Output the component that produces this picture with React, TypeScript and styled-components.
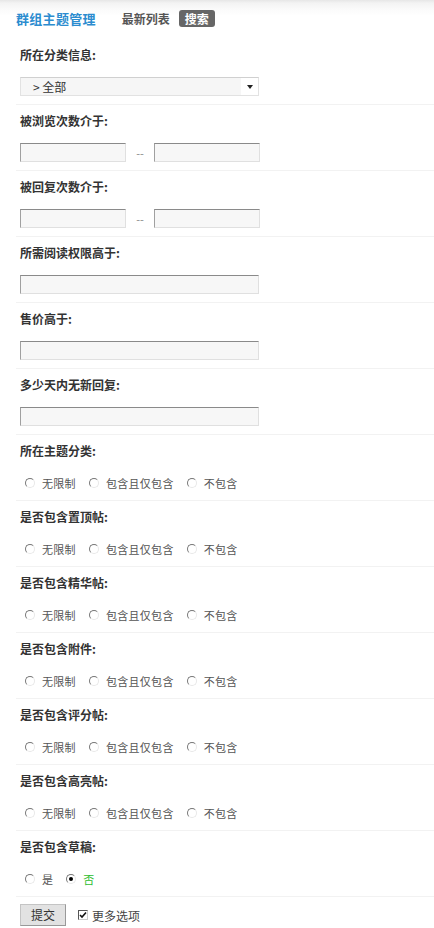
import React from "react";
import styled, { createGlobalStyle } from "styled-components";

const Global = createGlobalStyle`
  html, body { margin: 0; padding: 0; background: #fff; }
  body { font-family: "Noto Sans CJK SC", "Noto Sans", sans-serif; font-size: 12px; color: #333; }
  * { box-sizing: border-box; }
`;

const Page = styled.div`
  width: 434px;
`;

const Header = styled.div`
  height: 39px;
  display: flex;
  align-items: center;
  padding-left: 16px;
  padding-bottom: 2px;
  background: linear-gradient(#e6e6e6 0, #f3f3f3 3px, #fbfbfb 10px, #fff 16px);
`;

const Title = styled.div`
  font-size: 13px;
  color: #2c8ccf;
  font-weight: 700;
  letter-spacing: 0.3px;
  margin-right: 26px;
`;

const Tab = styled.div<{ $active?: boolean }>`
  font-size: 12px;
  font-weight: 700;
  height: 17px;
  line-height: 17px;
  padding: 0 ${(p) => (p.$active ? "6px" : "0")};
  margin-right: 9px;
  border-radius: 3px;
  color: ${(p) => (p.$active ? "#fff" : "#555")};
  background: ${(p) => (p.$active ? "#666" : "transparent")};
`;

const Form = styled.div`
  margin-left: 16px;
`;

const Section = styled.div`
  padding: 9px 0 8px 4px;
  border-bottom: 1px solid #f2f2f2;
`;

const Label = styled.div`
  height: 14px;
  line-height: 14px;
  font-weight: 700;
  color: #333;
  margin-bottom: 15px;
`;

const SelectBox = styled.div`
  width: 239px;
  height: 19px;
  border: 1px solid #e2e2e2;
  border-top-color: #d0d0d0;
  display: flex;
  align-items: center;
  background: linear-gradient(to right, #f6f6f6 0, #f6f6f6 220px, #fff 220px);
  padding-left: 12px;
  color: #333;
  font-size: 12px;
  position: relative;
`;

const Arrow = styled.span`
  position: absolute;
  right: 5px;
  top: 7px;
  width: 0;
  height: 0;
  border-left: 3px solid transparent;
  border-right: 3px solid transparent;
  border-top: 4px solid #222;
`;

const Range = styled.div`
  display: flex;
  align-items: center;
`;

const Input = styled.div<{ $wide?: boolean }>`
  width: ${(p) => (p.$wide ? "239px" : "106px")};
  height: 19px;
  background: #f7f7f7;
  border: 1px solid #e0e0e0;
  border-top-color: #8a8a8a;
  border-left-color: #a0a0a0;
`;

const Dash = styled.span`
  width: 28px;
  text-align: center;
  color: #888;
  font-size: 11px;
`;

const RadioRow = styled.div`
  height: 19px;
  display: flex;
  align-items: center;
  padding-left: 5px;
  gap: 13px;
`;

const RadioItem = styled.div`
  display: flex;
  align-items: center;
  gap: 7px;
`;

const Radio = styled.span<{ $checked?: boolean }>`
  width: 10px;
  height: 10px;
  border-radius: 50%;
  border: 1px solid;
  border-color: #777 #e8e8e8 #e8e8e8 #777;
  position: relative;
  background: #fff;
  &::after {
    content: "";
    display: ${(p) => (p.$checked ? "block" : "none")};
    position: absolute;
    left: 2px;
    top: 2px;
    width: 4px;
    height: 4px;
    border-radius: 50%;
    background: #000;
  }
`;

const RadioText = styled.span<{ $green?: boolean }>`
  color: ${(p) => (p.$green ? "#2dbd2d" : "#555")};
  font-size: 11px;
  letter-spacing: 0.3px;
`;

const Footer = styled.div`
  display: flex;
  align-items: center;
  padding: 7px 0 0 4px;
  gap: 12px;
`;

const Button = styled.div`
  width: 46px;
  height: 22px;
  line-height: 20px;
  text-align: center;
  background: #e2e2e2;
  border: 1px solid #c4c4c4;
  border-right-color: #999;
  border-bottom-color: #999;
  color: #333;
  font-size: 12px;
`;

const Check = styled.label`
  display: flex;
  align-items: center;
  gap: 4px;
  color: #444;
`;

const CheckBox = styled.span`
  width: 10px;
  height: 10px;
  border: 1px solid;
  border-color: #555 #ccc #ccc #555;
  display: flex;
  align-items: center;
  justify-content: center;
  background: #fff;
`;

const textSections = [
  { label: "被浏览次数介于:", range: true },
  { label: "被回复次数介于:", range: true },
  { label: "所需阅读权限高于:" },
  { label: "售价高于:" },
  { label: "多少天内无新回复:" },
];

const radioSections = [
  "所在主题分类:",
  "是否包含置顶帖:",
  "是否包含精华帖:",
  "是否包含附件:",
  "是否包含评分帖:",
  "是否包含高亮帖:",
];

const Opt = ({ text, checked, green }: { text: string; checked?: boolean; green?: boolean }) => (
  <RadioItem>
    <Radio $checked={checked} />
    <RadioText $green={green}>{text}</RadioText>
  </RadioItem>
);

export default function App() {
  return (
    <Page>
      <Global />
      <Header>
        <Title>群组主题管理</Title>
        <Tab>最新列表</Tab>
        <Tab $active>搜索</Tab>
      </Header>
      <Form>
        <Section>
          <Label>所在分类信息:</Label>
          <SelectBox>
            &gt; 全部
            <Arrow />
          </SelectBox>
        </Section>
        {textSections.map((s) => (
          <Section key={s.label}>
            <Label>{s.label}</Label>
            {s.range ? (
              <Range>
                <Input />
                <Dash>--</Dash>
                <Input />
              </Range>
            ) : (
              <Input $wide />
            )}
          </Section>
        ))}
        {radioSections.map((l) => (
          <Section key={l}>
            <Label>{l}</Label>
            <RadioRow>
              <Opt text="无限制" />
              <Opt text="包含且仅包含" />
              <Opt text="不包含" />
            </RadioRow>
          </Section>
        ))}
        <Section>
          <Label>是否包含草稿:</Label>
          <RadioRow>
            <Opt text="是" />
            <Opt text="否" checked green />
          </RadioRow>
        </Section>
        <Footer>
          <Button>提交</Button>
          <Check>
            <CheckBox>
              <svg width="8" height="8" viewBox="0 0 8 8">
                <path d="M1 4 L3 6 L7 1.5" stroke="#111" strokeWidth="1.6" fill="none" />
              </svg>
            </CheckBox>
            更多选项
          </Check>
        </Footer>
      </Form>
    </Page>
  );
}
